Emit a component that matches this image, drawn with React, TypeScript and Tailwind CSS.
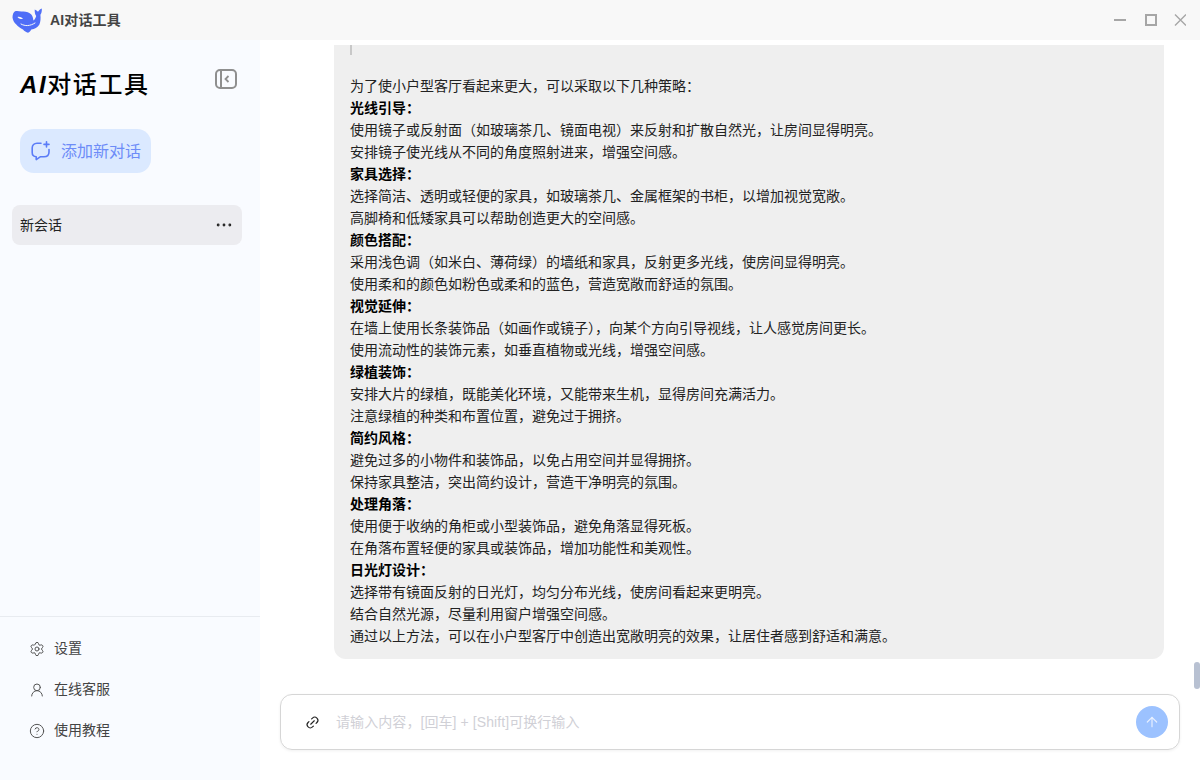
import React from 'react';
import { CircleHelp, Ellipsis, Link2, Settings, UserRound, ArrowUp } from 'lucide-react';

const FONT = '"Liberation Sans", "Noto Sans CJK SC", sans-serif';

type Line = { text: string; bold?: boolean };

const lines: Line[] = [
  { text: '为了使小户型客厅看起来更大，可以采取以下几种策略：' },
  { text: '光线引导：', bold: true },
  { text: '使用镜子或反射面（如玻璃茶几、镜面电视）来反射和扩散自然光，让房间显得明亮。' },
  { text: '安排镜子使光线从不同的角度照射进来，增强空间感。' },
  { text: '家具选择：', bold: true },
  { text: '选择简洁、透明或轻便的家具，如玻璃茶几、金属框架的书柜，以增加视觉宽敞。' },
  { text: '高脚椅和低矮家具可以帮助创造更大的空间感。' },
  { text: '颜色搭配：', bold: true },
  { text: '采用浅色调（如米白、薄荷绿）的墙纸和家具，反射更多光线，使房间显得明亮。' },
  { text: '使用柔和的颜色如粉色或柔和的蓝色，营造宽敞而舒适的氛围。' },
  { text: '视觉延伸：', bold: true },
  { text: '在墙上使用长条装饰品（如画作或镜子），向某个方向引导视线，让人感觉房间更长。' },
  { text: '使用流动性的装饰元素，如垂直植物或光线，增强空间感。' },
  { text: '绿植装饰：', bold: true },
  { text: '安排大片的绿植，既能美化环境，又能带来生机，显得房间充满活力。' },
  { text: '注意绿植的种类和布置位置，避免过于拥挤。' },
  { text: '简约风格：', bold: true },
  { text: '避免过多的小物件和装饰品，以免占用空间并显得拥挤。' },
  { text: '保持家具整洁，突出简约设计，营造干净明亮的氛围。' },
  { text: '处理角落：', bold: true },
  { text: '使用便于收纳的角柜或小型装饰品，避免角落显得死板。' },
  { text: '在角落布置轻便的家具或装饰品，增加功能性和美观性。' },
  { text: '日光灯设计：', bold: true },
  { text: '选择带有镜面反射的日光灯，均匀分布光线，使房间看起来更明亮。' },
  { text: '结合自然光源，尽量利用窗户增强空间感。' },
  { text: '通过以上方法，可以在小户型客厅中创造出宽敞明亮的效果，让居住者感到舒适和满意。' },
];

const WhaleLogo = () => (
  <svg width="30" height="25" viewBox="0 0 30 25" fill="#4f6ef7">
    <path d="M0.5 9.5 C0.5 6.5 1.5 4 3 3.2 C5 2.6 7 3 9.3 3.6 C13 3 17 4 19.3 6.5 C20.6 8 21.2 10.5 21.4 12.5 C22.8 11.5 23.8 9.8 24.2 8 C23 6.5 22.6 4 22.7 1.5 C24 2 25.2 2.8 26 3.8 C27 2.2 28.2 1 29.8 0.5 C30 3 29.6 5.2 28.4 6.8 C28.8 10.5 28.6 13.8 27.4 16.5 C25.6 19.5 22.6 21.2 19.3 21.6 C18.6 23 17.4 24.2 16 24.8 C14.2 24.2 12.4 23.2 11 21.5 C8.4 20.4 6 18.6 4.3 16.5 C2 14.5 0.8 12 0.5 9.5 Z" />
    <path d="M5.5 9 C7.5 8.4 9.5 9.2 11 10.8 C9 11.4 6.8 10.8 5.5 9 Z" fill="#f8f8f8" />
    <path d="M9 16 C13 18.4 18 18.2 23 15" fill="none" stroke="#f8f8f8" strokeWidth="1" strokeLinecap="round" />
  </svg>
);

const CollapseIcon = () => (
  <svg width="22" height="20" viewBox="0 0 22 20" fill="none" stroke="#8f8f8f" strokeWidth="2">
    <rect x="1" y="1" width="20" height="18" rx="4" />
    <path d="M6 1 V19" />
    <path d="M13.5 7 L10.5 10 L13.5 13" strokeWidth="1.8" />
  </svg>
);

const NewChatIcon = () => (
  <svg width="20" height="20" viewBox="0 0 20 20" fill="none" stroke="#5b7cf7" strokeWidth="1.6" strokeLinecap="round" strokeLinejoin="round">
    <path d="M10 2.2 H6 C3.2 2.2 1.2 4.2 1.2 7 V11.5 C1.2 14 3 15.6 5.2 15.8 V18.6 L9.2 15.8 H13 C16 15.8 18 14 18 11 V8.5" />
    <path d="M15.5 0.8 V6 M13 3.4 H18" />
  </svg>
);

const WindowControls = () => (
  <svg width="72" height="14" viewBox="0 0 72 14" fill="none" stroke="#a6a6a6">
    <path d="M0 7 H12" strokeWidth="2" />
    <rect x="32" y="2" width="10" height="10" strokeWidth="2" />
    <path d="M61 1.5 L72 12.5 M72 1.5 L61 12.5" strokeWidth="1.4" />
  </svg>
);

const FooterItem = ({ icon, label }: { icon: React.ReactNode; label: string }) => (
  <div className="flex h-[41px] items-center gap-[9px] pl-[29px] text-[14px] text-[#444]">
    <span className="flex w-4 justify-center text-[#555]">{icon}</span>
    <span>{label}</span>
  </div>
);

export default function App() {
  return (
    <div className="relative flex h-[780px] w-[1200px] flex-col overflow-hidden bg-white" style={{ fontFamily: FONT }}>
      <header className="flex h-10 shrink-0 items-center justify-between bg-[#f8f8f8] pl-3 pr-[14px]">
        <div className="flex items-center gap-2">
          <WhaleLogo />
          <span className="text-[14px] font-bold tracking-[0.15px] text-[#444]">AI对话工具</span>
        </div>
        <WindowControls />
      </header>

      <div className="flex min-h-0 flex-1">
        <aside className="flex w-[260px] shrink-0 flex-col bg-[#f9fbff]">
          <div className="flex items-start justify-between pl-5 pr-[23px] pt-[28px]">
            <div className="text-[24px] font-medium leading-[34px] tracking-[1.6px] text-black">
              <span className="font-bold italic">AI</span>对话工具
            </div>
            <div className="pt-[1px]"><CollapseIcon /></div>
          </div>
          <div className="pl-5 pt-[27px]">
            <div className="flex h-11 w-[131px] items-center gap-[10px] rounded-[14px] bg-[#dbe9ff] pl-[11px] text-[16px] text-[#6d8cf8]">
              <NewChatIcon />
              <span className="pt-[1px]">添加新对话</span>
            </div>
          </div>
          <div className="pl-3 pr-[18px] pt-8">
            <div className="flex h-10 items-center justify-between rounded-lg bg-[#ececf0] pl-2 pr-2 text-[14px] text-[#222]">
              <span>新会话</span>
              <Ellipsis size={20} strokeWidth={1.4} className="text-[#222]" />
            </div>
          </div>
          <div className="mt-auto border-t border-[#e8ebf0] pb-[29px] pt-[11px]">
            <FooterItem icon={<Settings size={16} strokeWidth={1.5} />} label="设置" />
            <FooterItem icon={<UserRound size={16} strokeWidth={1.5} />} label="在线客服" />
            <FooterItem icon={<CircleHelp size={16} strokeWidth={1.5} />} label="使用教程" />
          </div>
        </aside>

        <main className="flex min-w-0 flex-1 flex-col">
          <div className="min-h-0 flex-1 overflow-hidden pl-[74px] pr-[36px] pt-[5px]">
            <div className="rounded-b-xl bg-[#efefef] px-4 pb-[12px] text-[14px] leading-[22px] text-[#222]">
              <div className="mb-[20px] h-[10px] w-[2px] bg-[#c8c8c8]" />
              {lines.map((line) => (
                <div key={line.text} className={line.bold ? 'font-bold text-black' : ''}>
                  {line.text}
                </div>
              ))}
            </div>
          </div>
          <div className="shrink-0 px-5 pb-[30px]">
            <div className="flex h-14 items-center rounded-xl border border-[#d6d6d6] pl-[24px] pr-[11px] shadow-[0_1px_3px_rgba(0,0,0,0.06)]">
              <Link2 size={15} strokeWidth={1.8} className="-rotate-45 text-[#222]" />
              <span className="ml-[16px] flex-1 text-[14px] tracking-[0.08px] text-[#d0d0d6]">请输入内容，[回车] + [Shift]可换行输入</span>
              <div className="flex h-8 w-8 items-center justify-center rounded-full bg-[#9cc2ff] text-[#e6efff]">
                <ArrowUp size={16} strokeWidth={1.8} />
              </div>
            </div>
          </div>
        </main>
      </div>

      <div className="absolute left-[1194px] top-[662px] h-[27px] w-[6px] rounded-[3px] bg-[#b8c1d2]" />
    </div>
  );
}
